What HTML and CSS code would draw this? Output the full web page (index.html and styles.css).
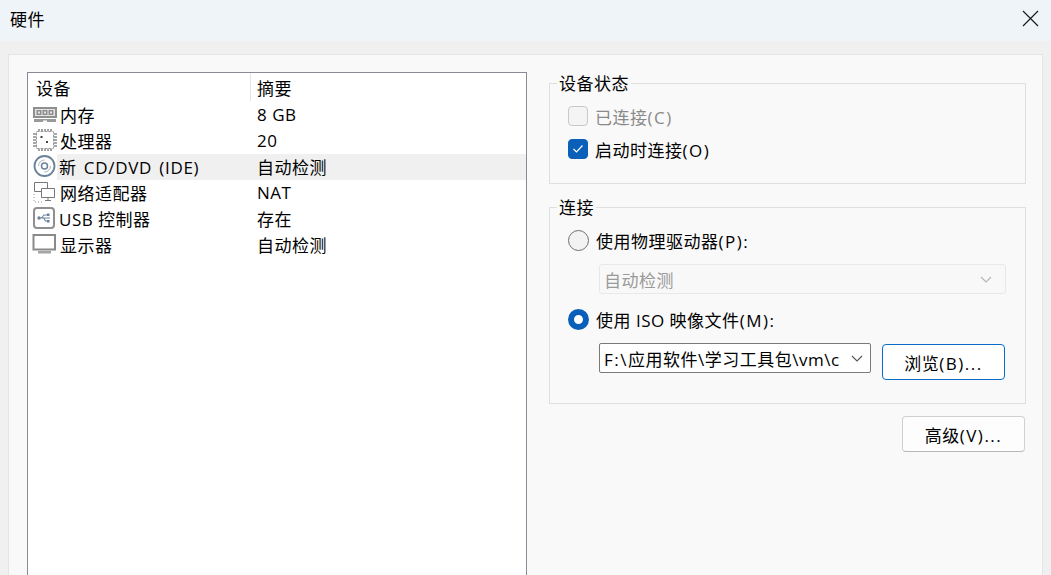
FILE: index.html
```html
<!DOCTYPE html>
<html lang="zh-CN">
<head>
  <meta charset="UTF-8" />
  <title>硬件</title>
  <link rel="stylesheet" href="styles.css">
</head>
<body>
  <header class="titlebar">
    <span class="title">硬件</span>
    <svg class="close" width="18" height="18" viewBox="0 0 18 18"><path d="M2 2l15 15M17 2L2 17" stroke="#1a1a1a" stroke-width="1.200" fill="none"/></svg>
  </header>

  <main class="panel">
    <section class="devices">
      <div class="row head">
        <div class="col-name">设备</div>
        <div class="col-sum">摘要</div>
      </div>

      <div class="row">
        <div class="col-name">
          <svg class="icon" width="26" height="22" viewBox="0 0 26 22"><path d="M1 4h24v11H1z" fill="#8f8f8f"/><path d="M3 6h20v7H3z" fill="#e4e4e4"/><path d="M4.500 7h5v5h-5zM10.500 7h5v5h-5zM16.500 7h5v5h-5z" fill="#8f8f8f"/><path d="M6 8.500h2v2H6zM12 8.500h2v2h-2zM18 8.500h2v2h-2z" fill="#e4e4e4"/><path d="M2 16h22v3H15v-1.500h-4V19H2z" fill="#9a9a9a"/></svg>
          <span class="label">内存</span>
        </div>
        <div class="col-sum">8 GB</div>
      </div>

      <div class="row">
        <div class="col-name">
          <svg class="icon" width="26" height="24" viewBox="0 0 26 24"><rect x="4.500" y="3.500" width="17" height="17" fill="#fff" stroke="#9a9a9a" stroke-dasharray="3 1"/><path d="M7 1v2M10 1v2M13 1v2M16 1v2M19 1v2M7 21v2M10 21v2M13 21v2M16 21v2M19 21v2M1 6h3M1 9h3M1 12h3M1 15h3M1 18h3M22 6h3M22 9h3M22 12h3M22 15h3M22 18h3" stroke="#8a8a8a" stroke-width="1.600"/><path d="M8.500 8h2v2h-2zM14 13h2v2h-2z" fill="#444"/></svg>
          <span class="label">处理器</span>
        </div>
        <div class="col-sum">20</div>
      </div>

      <div class="row selected">
        <div class="col-name">
          <svg class="icon" width="26" height="24" viewBox="0 0 26 24"><circle cx="12.500" cy="12" r="10" fill="#fff" stroke="#6a8298" stroke-width="1.800"/><circle cx="12.500" cy="12" r="3" fill="none" stroke="#6a8298" stroke-width="1.500"/><path d="M6.500 12a6 6 0 0 1 6-6M18.500 12a6 6 0 0 1-6 6" fill="none" stroke="#a9b6c2"/></svg>
          <span class="label-plain wide">新 CD/DVD (IDE)</span>
        </div>
        <div class="col-sum">自动检测</div>
      </div>

      <div class="row">
        <div class="col-name">
          <svg class="icon" width="26" height="24" viewBox="0 0 26 24"><path d="M2.500 2.500h13v9h-13z" fill="#fff" stroke="#777"/><path d="M9.500 8.500h13v9h-13z" fill="#fff" stroke="#777"/><path d="M16 18v2M13 20.500h6" stroke="#777"/><path d="M2 14v8h9" fill="none" stroke="#999" stroke-dasharray="1 2"/></svg>
          <span class="label">网络适配器</span>
        </div>
        <div class="col-sum">NAT</div>
      </div>

      <div class="row">
        <div class="col-name">
          <svg class="icon" width="26" height="24" viewBox="0 0 26 24"><rect x="2" y="2" width="20" height="20" rx="3" fill="#fff" stroke="#8f8f8f" stroke-width="2"/><path d="M7 12h11M9.500 12l2.500-3h3M11.500 12l2 3h2" fill="none" stroke="#6a8298" stroke-width="1.100"/><circle cx="7" cy="12" r="1.700" fill="#6a8298"/><path d="M15 7.500h2.500V10H15zM15 14h2.500v2.500H15z" fill="#6a8298"/></svg>
          <span class="label-plain">USB 控制器</span>
        </div>
        <div class="col-sum">存在</div>
      </div>

      <div class="row">
        <div class="col-name">
          <svg class="icon" width="26" height="22" viewBox="0 0 26 22"><path d="M1.500 2h21.500v14.500H1.500z" fill="#fff" stroke="#8a8a8a" stroke-width="2"/><path d="M6 18h13v2.500H6z" fill="#a5a5a5"/></svg>
          <span class="label">显示器</span>
        </div>
        <div class="col-sum">自动检测</div>
      </div>
    </section>

    <section class="options">
      <fieldset class="group status">
        <legend>设备状态</legend>
        <div class="check disabled"><span class="box"></span><span>已连接<span class="key">(C)</span></span></div>
        <div class="check"><span class="box checked"><svg width="12" height="10" viewBox="0 0 12 10"><path d="M1.500 5l3 3 6-6.500" fill="none" stroke="#fff" stroke-width="1.200"/></svg></span><span>启动时连接<span class="key">(O)</span></span></div>
      </fieldset>

      <fieldset class="group connect">
        <legend>连接</legend>
        <div class="radio"><span class="dot"></span><span>使用物理驱动器<span class="key">(P):</span></span></div>
        <div class="select off">自动检测<svg class="chev" width="12" height="7" viewBox="0 0 12 7"><path d="M1 1l5 5 5-5" fill="none" stroke="#b5b5b5" stroke-width="1.100"/></svg></div>
        <div class="radio second"><span class="dot on"></span><span>使用 ISO 映像文件<span class="key">(M):</span></span></div>
        <div class="iso-row">
          <div class="select path"><span class="path-text"><span class="key">F:\</span>应用软件\学习工具包\vm\c</span><svg class="chev" width="12" height="7" viewBox="0 0 12 7"><path d="M1 1l5 5 5-5" fill="none" stroke="#555" stroke-width="1.100"/></svg></div>
          <button class="btn primary">浏览<span class="key">(B)...</span></button>
        </div>
      </fieldset>

      <div class="actions"><button class="btn">高级<span class="key">(V)...</span></button></div>
    </section>
  </main>
</body>
</html>
```

FILE: styles.css
```css
* {
  box-sizing: border-box;
}

html, body {
  height: 575px;
  overflow: hidden;
}

body {
  margin: 0;
  background: #f0f0f0;
  color: #000;
  font-family: "Open Sans", "Noto Sans CJK SC", sans-serif;
  font-size: 17px;
  letter-spacing: 0.5px;
}

.titlebar {
  height: 41px;
  background: #eff4f9;
  display: flex;
  align-items: center;
  justify-content: space-between;
  padding: 0 12px 0 10px;
  margin-bottom: 13px;
}

.title {
  padding-bottom: 4px;
}

.close {
  margin-bottom: 5px;
}

.panel {
  margin: 0 8px;
  height: 540px;
  background: #f9f9f9;
  border: 1px solid #e5e5e5;
  padding: 17px 0 0 18px;
  display: flex;
  gap: 22px;
}

/* device list */
.devices {
  width: 500px;
  height: 520px;
  background: #fff;
  border: 1px solid #8a8a96;
}

.row {
  display: flex;
  align-items: center;
  height: 26px;
  padding-bottom: 2px;
  white-space: nowrap;
}

.row.head {
  height: 28px;
  margin-top: 1px;
}

.row.head .col-name {
  padding-left: 8px;
  height: 28px;
  border-right: 1px solid #e5e5e5;
}

.row.selected {
  background: linear-gradient(90deg, #fff 29px, #f0f0f0 29px);
}

.col-name {
  width: 223px;
  display: flex;
  align-items: center;
}

.col-sum {
  padding-left: 6px;
}

.icon {
  flex: none;
  margin-left: 4px;
}

.label {
  margin-left: 2px;
}

.label-plain {
  margin-left: 1px;
}

.wide {
  word-spacing: 2px;
  letter-spacing: 0.7px;
}

/* right column */
.options {
  width: 477px;
}

.group {
  margin: 0;
  padding: 8px 0 0 18px;
  border: 1px solid #dfdfdf;
  min-width: 0;
}

.group legend {
  padding: 2px 2px 0;
  margin-left: -11px;
  line-height: 24px;
}

.status {
  height: 114px;
  margin-top: -2px;
  margin-bottom: 10px;
}

.connect {
  height: 210px;
}

.key {
  letter-spacing: 1.500px;
}

.check, .radio {
  display: flex;
  align-items: center;
  gap: 7px;
  height: 24px;
}

.check {
  margin-bottom: 9px;
}

.check.disabled {
  color: #8a8a8a;
}

.box {
  width: 20px;
  height: 20px;
  border-radius: 4px;
  background: #f4f4f4;
  border: 1px solid #c8c8c8;
  display: flex;
  align-items: center;
  justify-content: center;
}

.box.checked {
  background: #0a60b8;
  border-color: #0a60b8;
}

.dot {
  width: 21px;
  height: 21px;
  border-radius: 50%;
  background: #f3f3f3;
  border: 1px solid #707070;
}

.dot.on {
  background: #fff;
  border: 6px solid #0a60b8;
}

.select {
  display: flex;
  align-items: center;
  justify-content: space-between;
  margin-left: 31px;
  padding: 0 13px 0 4px;
  background: #fff;
}

.select.off {
  width: 407px;
  height: 30px;
  margin-top: 12px;
  margin-bottom: 13px;
  background: #f8f8f8;
  border: 1px solid #e8e8e8;
  border-radius: 3px;
  color: #9a9a9a;
}

.radio.second {
  margin-bottom: 12px;
}

.iso-row {
  display: flex;
  align-items: flex-start;
  gap: 11px;
}

.select.path {
  width: 272px;
  height: 30px;
  border: 1px solid #7a7a7a;
  border-radius: 2px;
  padding-right: 7px;
}

.path-text {
  width: 238px;
  overflow: hidden;
  white-space: nowrap;
}

.btn {
  font: inherit;
  letter-spacing: inherit;
  color: inherit;
  width: 123px;
  height: 36px;
  background: #fdfdfd;
  border: 1px solid #d0d0d0;
  border-bottom-color: #b8b8b8;
  border-radius: 4px;
  padding: 0;
}

.btn.primary {
  background: #fff;
  border-color: #0a6cc8;
  margin-top: 1px;
}

.actions {
  display: flex;
  justify-content: flex-end;
  margin-top: 12px;
  padding-right: 1px;
}
```
